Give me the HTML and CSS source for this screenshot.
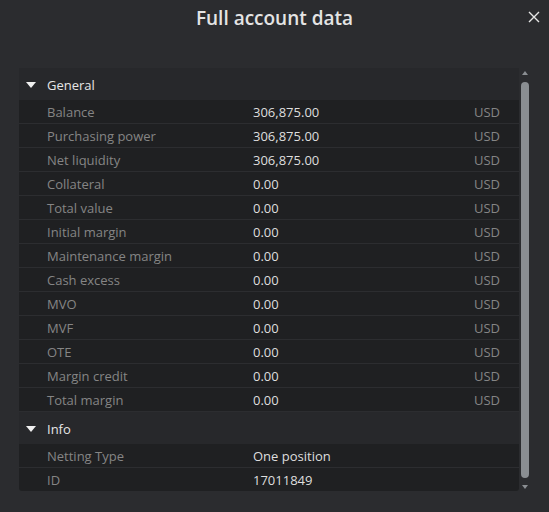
FILE: index.html
```html
<!DOCTYPE html>
<html lang="en">
<head>
  <meta charset="UTF-8" />
  <title>Full account data</title>
  <link rel="stylesheet" href="styles.css">
</head>
<body>
  <div class="dialog">
    <div class="title-bar">
      <div class="title">Full account data</div>
      <div class="close-button">
        <svg width="12" height="12" viewBox="0 0 12 12"><path d="M1 1L11 11M11 1L1 11" stroke="#e6e6e6" stroke-width="1.4" fill="none"/></svg>
      </div>
    </div>

    <div class="content">
      <div class="table">
        <div class="group-header"><span class="caret"></span>General</div>
        <div class="row"><div class="label">Balance</div><div class="value">306,875.00</div><div class="unit">USD</div></div>
        <div class="row"><div class="label">Purchasing power</div><div class="value">306,875.00</div><div class="unit">USD</div></div>
        <div class="row"><div class="label">Net liquidity</div><div class="value">306,875.00</div><div class="unit">USD</div></div>
        <div class="row"><div class="label">Collateral</div><div class="value">0.00</div><div class="unit">USD</div></div>
        <div class="row"><div class="label">Total value</div><div class="value">0.00</div><div class="unit">USD</div></div>
        <div class="row"><div class="label">Initial margin</div><div class="value">0.00</div><div class="unit">USD</div></div>
        <div class="row"><div class="label">Maintenance margin</div><div class="value">0.00</div><div class="unit">USD</div></div>
        <div class="row"><div class="label">Cash excess</div><div class="value">0.00</div><div class="unit">USD</div></div>
        <div class="row"><div class="label">MVO</div><div class="value">0.00</div><div class="unit">USD</div></div>
        <div class="row"><div class="label">MVF</div><div class="value">0.00</div><div class="unit">USD</div></div>
        <div class="row"><div class="label">OTE</div><div class="value">0.00</div><div class="unit">USD</div></div>
        <div class="row"><div class="label">Margin credit</div><div class="value">0.00</div><div class="unit">USD</div></div>
        <div class="row"><div class="label">Total margin</div><div class="value">0.00</div><div class="unit">USD</div></div>
        <div class="group-header"><span class="caret"></span>Info</div>
        <div class="row"><div class="label">Netting Type</div><div class="value">One position</div><div class="unit"></div></div>
        <div class="row last"><div class="label">ID</div><div class="value">17011849</div><div class="unit"></div></div>
      </div>

      <div class="scrollbar">
        <span class="arrow-up"></span>
        <div class="thumb"></div>
        <span class="arrow-down"></span>
      </div>
    </div>
  </div>
</body>
</html>
```

FILE: styles.css
```css
* {
  margin: 0;
  padding: 0;
  box-sizing: border-box;
  font-family: "Open Sans", "Noto Sans", sans-serif;
}

html, body {
  width: 100%;
  height: 100%;
  background-color: #2b2c2f;
  overflow: hidden;
}

.dialog {
  width: 549px;
  height: 512px;
}

.title-bar {
  position: relative;
  height: 36px;
  display: flex;
  justify-content: center;
  align-items: center;
}

.title {
  font-size: 19px;
  font-weight: 600;
  color: #e4e4e4;
}

.close-button {
  position: absolute;
  right: 9px;
  top: 11px;
  width: 12px;
  height: 12px;
  display: flex;
}

.content {
  display: flex;
  gap: 2px;
  padding: 32px 0 0 19px;
}

.table {
  width: 500px;
  background-color: #1f2022;
  border-radius: 0 0 3px 3px;
  overflow: hidden;
}

.group-header {
  height: 32px;
  display: flex;
  align-items: center;
  background-color: #27282b;
  color: #e6e6e6;
  font-size: 13px;
  padding: 2px 0 0 7px;
}

.caret {
  width: 0;
  height: 0;
  border-left: 5px solid transparent;
  border-right: 5px solid transparent;
  border-top: 6px solid #f0f0f0;
  margin-right: 11px;
}

.row {
  height: 24px;
  display: flex;
  align-items: center;
  border-bottom: 1px solid #2c2d30;
  font-size: 13px;
  padding: 1px 19px 0 28px;
}

.row.last {
  border-bottom: none;
  height: 23px;
}

.label {
  width: 206px;
  color: #858585;
}

.value {
  flex: 1;
  color: #dedede;
}

.unit {
  color: #858585;
}

.scrollbar {
  width: 8px;
  height: 423px;
  display: flex;
  flex-direction: column;
  align-items: center;
}

.arrow-up {
  width: 0;
  height: 0;
  margin-top: 3px;
  border-left: 3px solid transparent;
  border-right: 3px solid transparent;
  border-bottom: 4px solid #8a8e92;
}

.thumb {
  width: 8px;
  height: 396px;
  margin-top: 7px;
  background-color: #8a8e92;
  border-radius: 4px;
}

.arrow-down {
  width: 0;
  height: 0;
  margin-top: 7px;
  border-left: 3px solid transparent;
  border-right: 3px solid transparent;
  border-top: 4px solid #8a8e92;
}
```
